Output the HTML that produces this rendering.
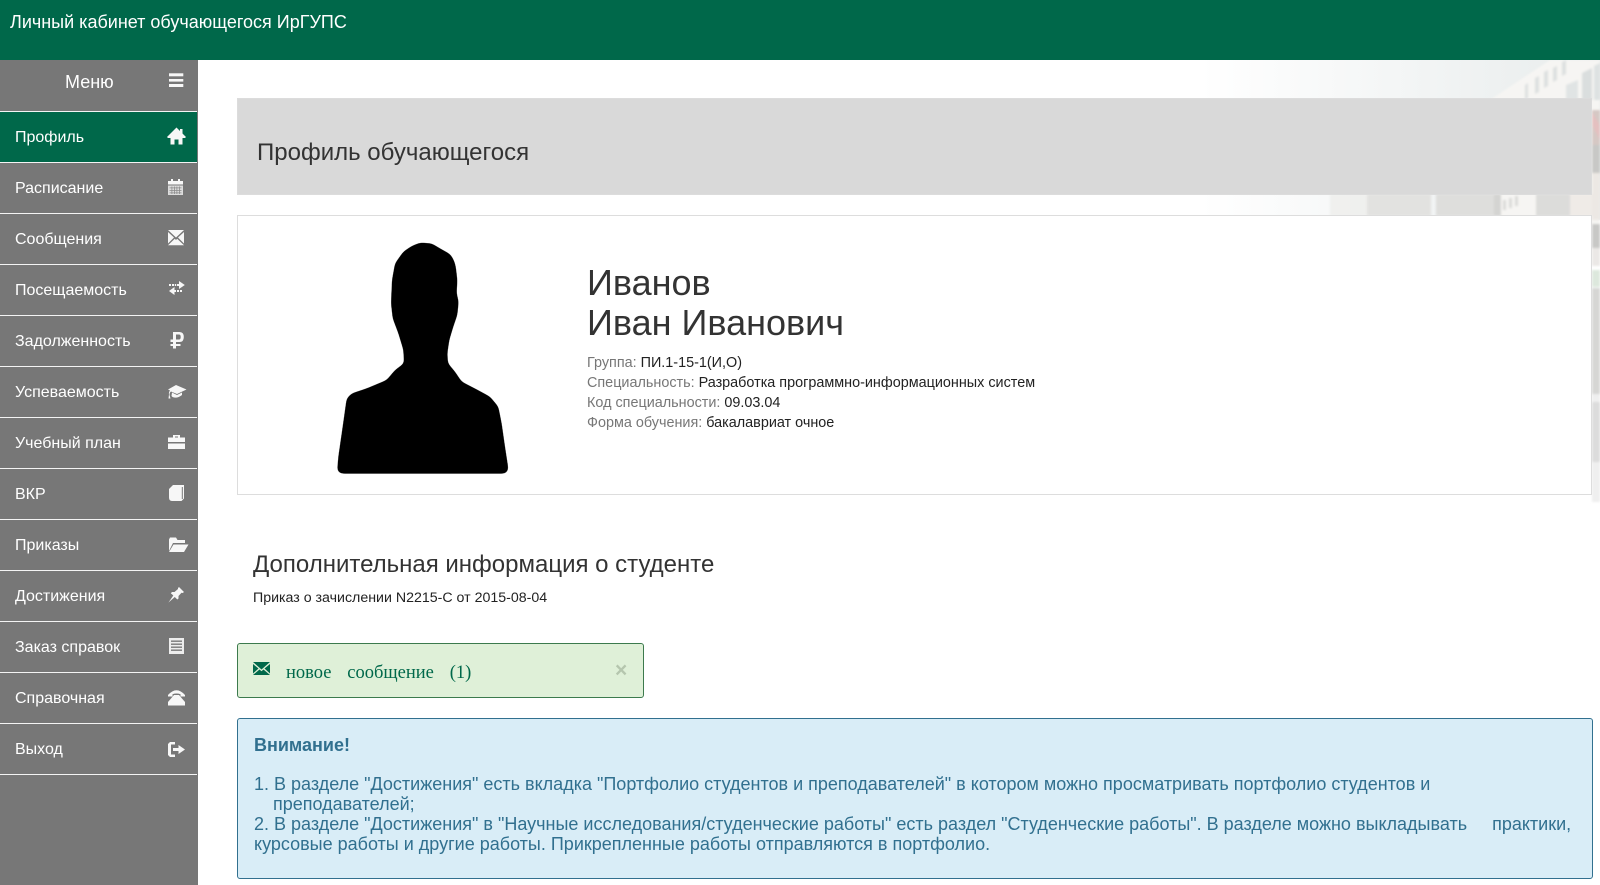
<!DOCTYPE html>
<html lang="ru"><head><meta charset="utf-8"><title>Личный кабинет</title>
<style>
html,body{margin:0;padding:0;width:1600px;height:885px;overflow:hidden;background:#fff;font-family:"Liberation Sans",sans-serif;color:#333}
.a{position:absolute;white-space:nowrap}
#top{left:0;top:0;width:1600px;height:60px;background:#00684a;color:#fff}
#side{left:0;top:60px;width:198px;height:825px;background:#777}
.it{position:absolute;left:0;width:197px;height:50px;border-bottom:1px solid #f4f4f4;color:#fff;font-size:16px;line-height:52px;text-indent:15px}
.it.on{background:#00684a}
.ln{position:absolute;left:0;top:51px;width:197px;height:1px;background:#f4f4f4}
.g{color:#777}
.d{color:#222}
</style></head><body>
<svg class="a" style="left:198px;top:60px" width="1402" height="460" viewBox="198 60 1402 460">
<defs>
<linearGradient id="w" x1="0" x2="1" y1="0" y2="0"><stop offset="0" stop-color="#fff"/><stop offset="1" stop-color="#e8ecec"/></linearGradient>
<filter id="b"><feGaussianBlur stdDeviation="1"/></filter>
</defs>
<rect x="1200" y="60" width="400" height="160" fill="url(#w)"/>
<g filter="url(#b)">
<polygon points="1490,100 1550,60 1600,60 1600,225 1480,225" fill="#f6f5f3"/>
<polygon points="1525,85 1528,83 1528,98 1525,100" fill="#dde0e0"/>
<polygon points="1535,78 1539,76 1539,92 1535,94" fill="#dde0e0"/>
<polygon points="1544,72 1548,70 1548,86 1544,88" fill="#dde0e0"/>
<polygon points="1553,68 1557,66 1557,80 1553,82" fill="#dde0e0"/>
<polygon points="1562,62 1566,60 1566,74 1562,76" fill="#dde0e0"/>
<polygon points="1582,73 1592,68 1592,100 1582,100" fill="#dadede"/>
<polygon points="1566,85 1578,80 1578,100 1566,100" fill="#e0e4e4"/>
<polygon points="1594,66 1600,63 1600,100 1594,100" fill="#dee2e2"/>
<rect x="1592" y="110" width="8" height="60" fill="#d6c8c4"/>
<polygon points="1592,112 1600,125 1600,140 1592,125" fill="#e4c0c0"/>
<rect x="1592" y="145" width="8" height="28" fill="#c8c8c6"/>
<rect x="1592" y="173" width="8" height="47" fill="#ece8e4"/>
<rect x="1592" y="224" width="8" height="24" fill="#c8c8c6"/>
<rect x="1592" y="248" width="8" height="18" fill="#ebe8e6"/>
<rect x="1592" y="270" width="8" height="17" fill="#dde8dd"/>
<rect x="1592" y="288" width="8" height="106" fill="#d6d6d4"/>
<rect x="1592" y="394" width="8" height="8" fill="#efefef"/>
<rect x="1592" y="402" width="8" height="60" fill="#dcdcdc"/>
<rect x="1592" y="462" width="8" height="40" fill="#efefef"/>
<rect x="1330" y="194" width="40" height="22" fill="#ececea" opacity=".7"/>
<rect x="1367" y="194" width="64" height="22" fill="#e2e2e0"/>
<rect x="1436" y="194" width="58" height="22" fill="#dededc"/>
<rect x="1494" y="194" width="7" height="22" fill="#d4d4d2"/>
<rect x="1503" y="200" width="3" height="10" fill="#dadad8"/>
<rect x="1509" y="198" width="3" height="10" fill="#dadad8"/>
<rect x="1515" y="196" width="3" height="10" fill="#dadad8"/>
<rect x="1536" y="194" width="34" height="22" fill="#dcdcda"/>
<rect x="1570" y="194" width="22" height="22" fill="#efebe7"/>
</g>
</svg>

<div class="a" id="top"><span class="a" style="left:10px;top:12px;font-size:18px;line-height:20px">Личный кабинет обучающегося ИрГУПС</span></div>

<div class="a" id="side">
<span class="a" style="left:65px;top:11px;color:#fff;font-size:18px;line-height:22px">Меню</span>
<div class="ln"></div>
<div class="it on" style="top:52px">Профиль</div>
<div class="it" style="top:103px">Расписание</div>
<div class="it" style="top:154px">Сообщения</div>
<div class="it" style="top:205px">Посещаемость</div>
<div class="it" style="top:256px">Задолженность</div>
<div class="it" style="top:307px">Успеваемость</div>
<div class="it" style="top:358px">Учебный план</div>
<div class="it" style="top:409px">ВКР</div>
<div class="it" style="top:460px">Приказы</div>
<div class="it" style="top:511px">Достижения</div>
<div class="it" style="top:562px">Заказ справок</div>
<div class="it" style="top:613px">Справочная</div>
<div class="it" style="top:664px">Выход</div>
</div>

<svg class="a" style="left:0;top:0" width="198" height="885" viewBox="0 0 198 885" fill="#f7f7f7">
<rect x="169" y="73.300" width="14.300" height="3"/><rect x="169" y="79" width="14.300" height="2.600"/><rect x="169" y="84" width="14.300" height="3"/>
<path d="M176.500 127.500L180 131V129H182.500V133.500L186 137L185 138H182.500V144.500H178.500V139.500H174.500V144.500H170.500V138H168L167 137Z"/>
<path d="M168 181H171V179H173V181H178V179H180V181H183V184.500H168Z"/>
<path d="M168 185.500H183V195H168Z" fill="#dcdcdc"/><path d="M169.500 187.500h12v.8h-12zM169.500 190h12v.8h-12zM169.500 192.500h12v.8h-12zM171.500 186.500h.8v7.500h-.8zM174 186.500h.8v7.500h-.8zM176.500 186.500h.8v7.500h-.8zM179 186.500h.8v7.500h-.8z" fill="#8a8a8a"/>
<path d="M168 230H184L176 237.500ZM168 232V243.500L174 237.500ZM184 232V243.500L178 237.500ZM168 245.200L174.800 238.800L176 240L177.200 238.800L184 245.200Z"/>
<path d="M179 281L184.800 285L179 289V286H177V284H179ZM169 284h2v2h-2zM172 284h2v2h-2zM174.800 284h1.400v2h-1.400zM174.500 287V290H176V292H174.500V295L169 291ZM177 290h2v2h-2zM180 290h2v2h-2z"/>
<path fill-rule="evenodd" d="M173 332H179.500Q183.800 332 183.800 337Q183.800 342 179.500 342H176V344H180.500V346H176V348.500H173V346H170.500V344H173V342H170.500V339.500H173ZM176 334.500V339.500H179Q180.700 339.500 180.700 337Q180.700 334.500 179 334.500Z"/>
<path d="M176 385L186.500 389.500L177 394L171 391.500Q169.500 392.500 169.500 395L170.500 398.500L168.500 398.500L169 394.500Q168.600 392 170 390.500L168 389.500ZM172 392.500L177 395L182 392.500V395Q177 399 172.500 397L171.500 396Z"/>
<path fill-rule="evenodd" d="M173 437.500V435H180V437.500H185V442H168V437.500ZM175 437.500H178V436.500H175Z"/><path d="M168 443.500H185V449H168Z"/>
<path d="M173 485H184V498.500L181.500 501H172Q169 501 169 497.500V489Z"/><path d="M182.300 487V499" stroke="#777" stroke-width="1" fill="none"/>
<path d="M169 551V539.500L170 537.500H176L177.500 540H185V543H173L169 551ZM173.500 544.500H188.500L184 552H169Z"/>
<path d="M179 587L184 592L182.700 593L181.500 592.800L178.500 596L178.500 598.500L177.300 599.500L174.800 597L168.500 602.500L173.300 595.500L170.800 593.200L172 592L174.500 592L178 589L178 588Z"/>
<path d="M169 638H184V654H169Z" fill="#ededed"/><path d="M171 640.500h11v1.400h-11zM171 643.500h11v1.400h-11zM171 646.500h11v1.400h-11zM171 649.500h11v1.400h-11z" fill="#777"/>
<path d="M168 695Q176.500 685.500 185 695V696.500H180.500V694.200Q176.500 692.800 172.500 694.200V696.500H168ZM174 695H179L185 702V705.500H168V702Z"/>
<path d="M175 742H170L168 744V755L170 757H175V754.500H171V744.500H175ZM178.500 745V748H173V751H178.500V754L185 749.500Z"/>
</svg>

<div class="a" style="left:237px;top:98px;width:1353px;height:95px;background:#d9d9d9;border:1px solid #dcdcdc"></div>
<span class="a" style="left:257px;top:138px;font-size:24px;line-height:30px;color:#333">Профиль обучающегося</span>

<div class="a" style="left:237px;top:215px;width:1353px;height:278px;background:#fff;border:1px solid #ddd"></div>
<svg class="a" style="left:320px;top:230px" width="220" height="260" viewBox="0 0 660 780">
<defs><filter id="sm" x="-5%" y="-5%" width="110%" height="110%"><feGaussianBlur stdDeviation="7"/><feComponentTransfer><feFuncA type="linear" slope="9" intercept="-4"/></feComponentTransfer></filter></defs>
<path filter="url(#sm)" fill="#000" d="M300 38L335 40L360 55L390 72Q405 90 408 115L412 150L410 190L416 215L412 255L400 290L388 330L382 370L384 400L405 425L425 455L470 478L510 500L535 530L545 580L555 650L565 715Q564 731 550 731L70 731Q50 730 52 715L55 680L68 590L80 505L95 490L140 475L200 450L225 420L252 400L250 360L235 310L218 265L213 220L216 150L225 100L250 65L275 48Z"/>
</svg>
<div class="a" style="left:587px;top:263px;font-size:36px;line-height:40px;color:#333">Иванов<br>Иван Иванович</div>
<div class="a" style="left:587px;top:353px;font-size:14.400px;line-height:20px">
<span class="g">Группа:</span> <span class="d">ПИ.1-15-1(И,О)</span><br>
<span class="g">Специальность:</span> <span class="d">Разработка программно-информационных систем</span><br>
<span class="g">Код специальности:</span> <span class="d">09.03.04</span><br>
<span class="g">Форма обучения:</span> <span class="d">бакалавриат очное</span></div>

<span class="a" style="left:253px;top:550px;font-size:24px;line-height:30px;color:#333">Дополнительная информация о студенте</span>
<span class="a" style="left:253px;top:588px;font-size:14.200px;line-height:20px;color:#222">Приказ о зачислении N2215-C от 2015-08-04</span>

<div class="a" style="left:237px;top:643px;width:405px;height:53px;background:#dff0d8;border:1px solid #3c7a4d;border-radius:3px"></div>
<svg class="a" style="left:253px;top:661px" width="18" height="16" viewBox="0 0 18 16" fill="#00684a"><path d="M0 1H17L8.500 8.500ZM0 3V12.500L5.500 7.500ZM17 3V12.500L11.500 7.500ZM0 14L6.500 8.500L8.500 10.200L10.500 8.500L17 14Z"/></svg>
<span class="a" style="left:286px;top:663px;font-family:'Liberation Serif',serif;font-size:18.500px;line-height:20px;color:#00684a;word-spacing:11.200px">новое сообщение (1)</span>
<span class="a" style="left:615px;top:660px;font-size:21px;font-weight:bold;line-height:21px;color:#b5c6ae">×</span>

<div class="a" style="left:237px;top:718px;width:1354px;height:159px;background:#d9edf7;border:1px solid #31708f;border-radius:3px"></div>
<span class="a" style="left:254px;top:734px;font-size:18px;font-weight:bold;line-height:22px;color:#31708f">Внимание!</span>
<div class="a" style="left:254px;top:774px;font-size:18px;line-height:20px;color:#31708f">
1. В разделе "Достижения" есть вкладка "Портфолио студентов и преподавателей" в котором можно просматривать портфолио студентов и<br>
<span style="margin-left:19px">преподавателей;</span><br>
2. В разделе "Достижения" в "Научные исследования/студенческие работы" есть раздел "Студенческие работы". В разделе можно выкладывать<span style="margin-left:25px">практики,</span><br>
курсовые работы и другие работы. Прикрепленные работы отправляются в портфолио.</div>
</body></html>
